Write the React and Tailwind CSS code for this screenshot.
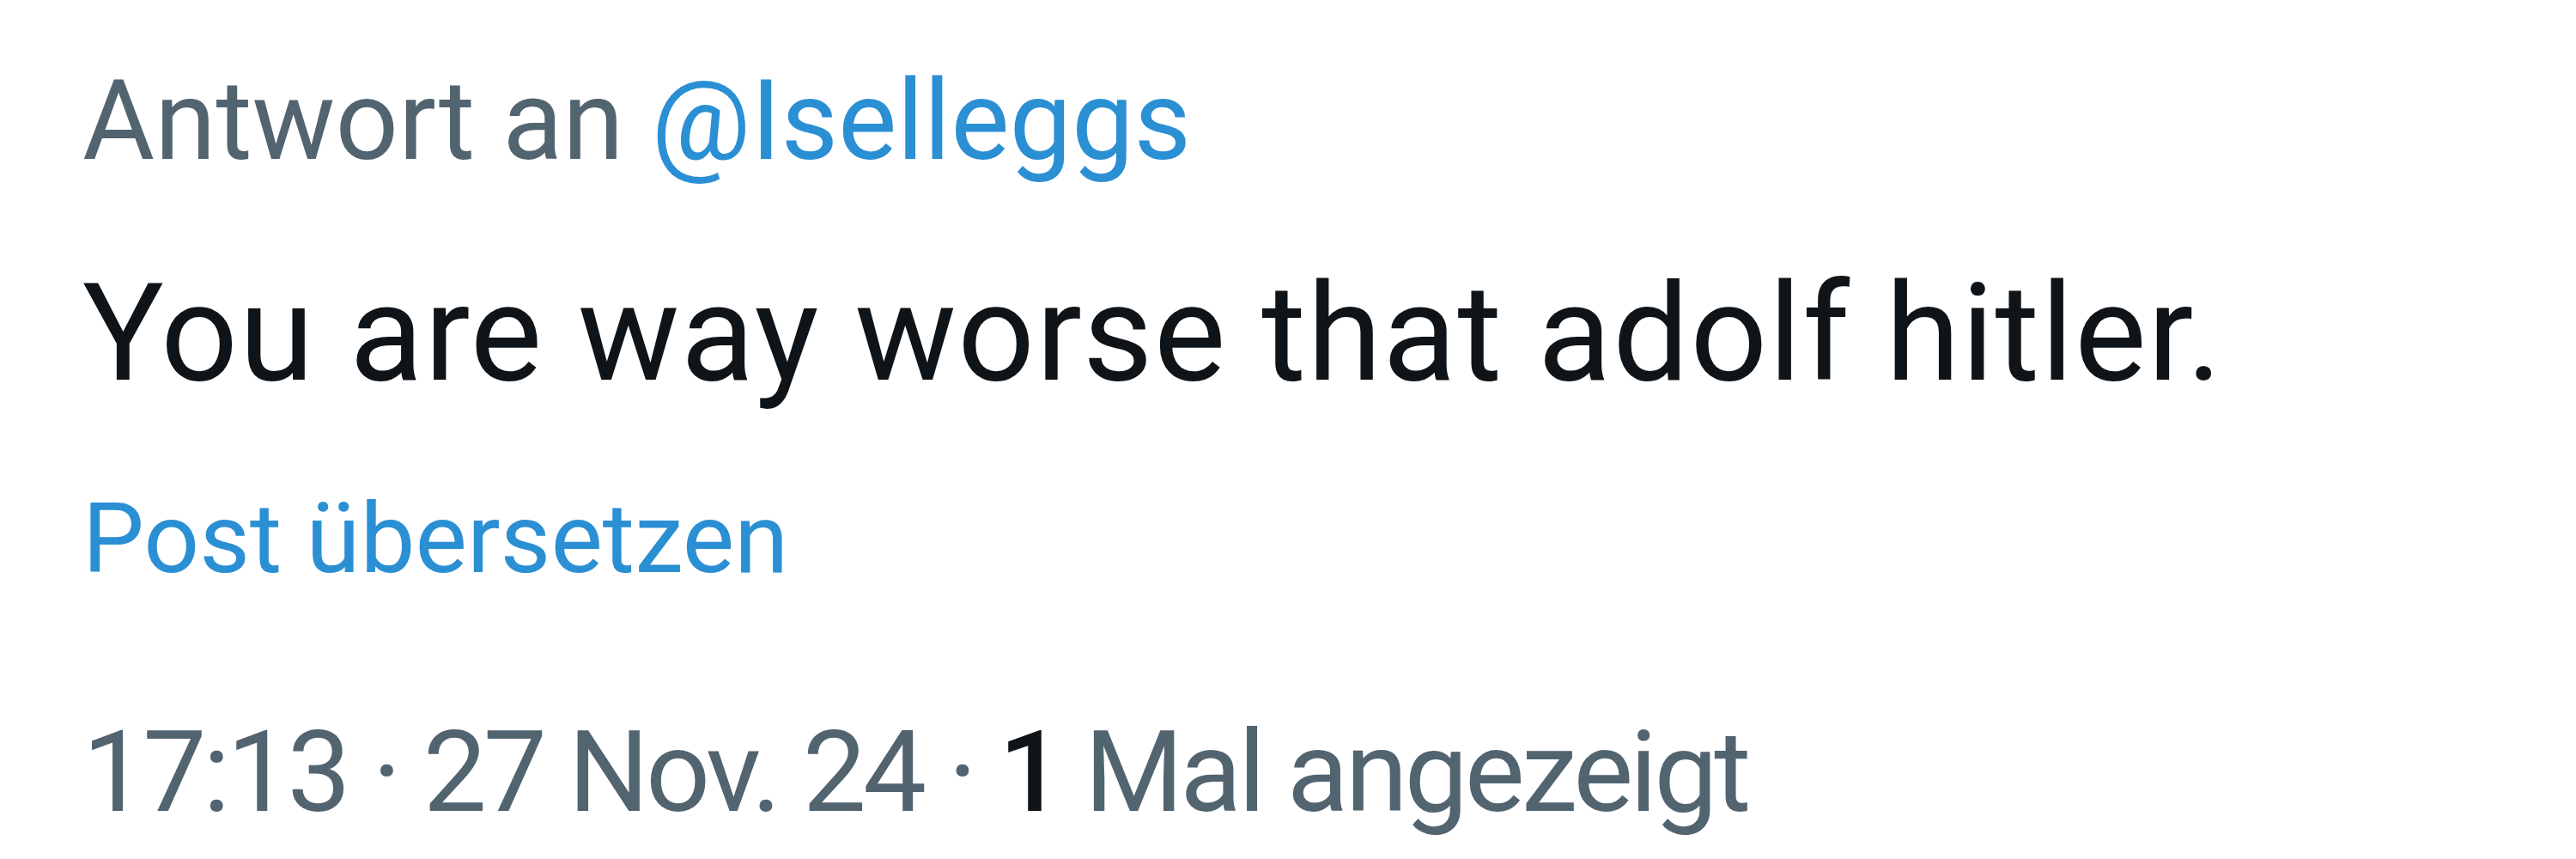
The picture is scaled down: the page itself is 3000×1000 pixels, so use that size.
import React from 'react';

const App = () => {
    return (
        <div className="w-[3000px] h-[1000px] bg-white overflow-hidden pl-[96px] pt-[76px]" style={{ fontFamily: 'Roboto, "Noto Sans", sans-serif' }}>
            <div className="text-[129px] leading-[129px] text-[#536471] whitespace-nowrap">
                Antwort an <span className="text-[#2b8fd4]">@Iselleggs</span>
            </div>
            <div className="mt-[104px] text-[158px] leading-[158px] tracking-[1.2px] text-[#0f1419] whitespace-nowrap">
                You are way worse that adolf hitler.
            </div>
            <div className="mt-[103px] text-[114px] leading-[114px] text-[#2b8fd4] whitespace-nowrap">
                Post übersetzen
            </div>
            <div className="mt-[149px] text-[132px] leading-[132px] tracking-[-4px] text-[#536471] whitespace-nowrap">
                17:13 · 27 Nov. 24 · <span className="font-medium text-[#0f1419]">1</span> Mal angezeigt
            </div>
        </div>
    );
};

export default App;
